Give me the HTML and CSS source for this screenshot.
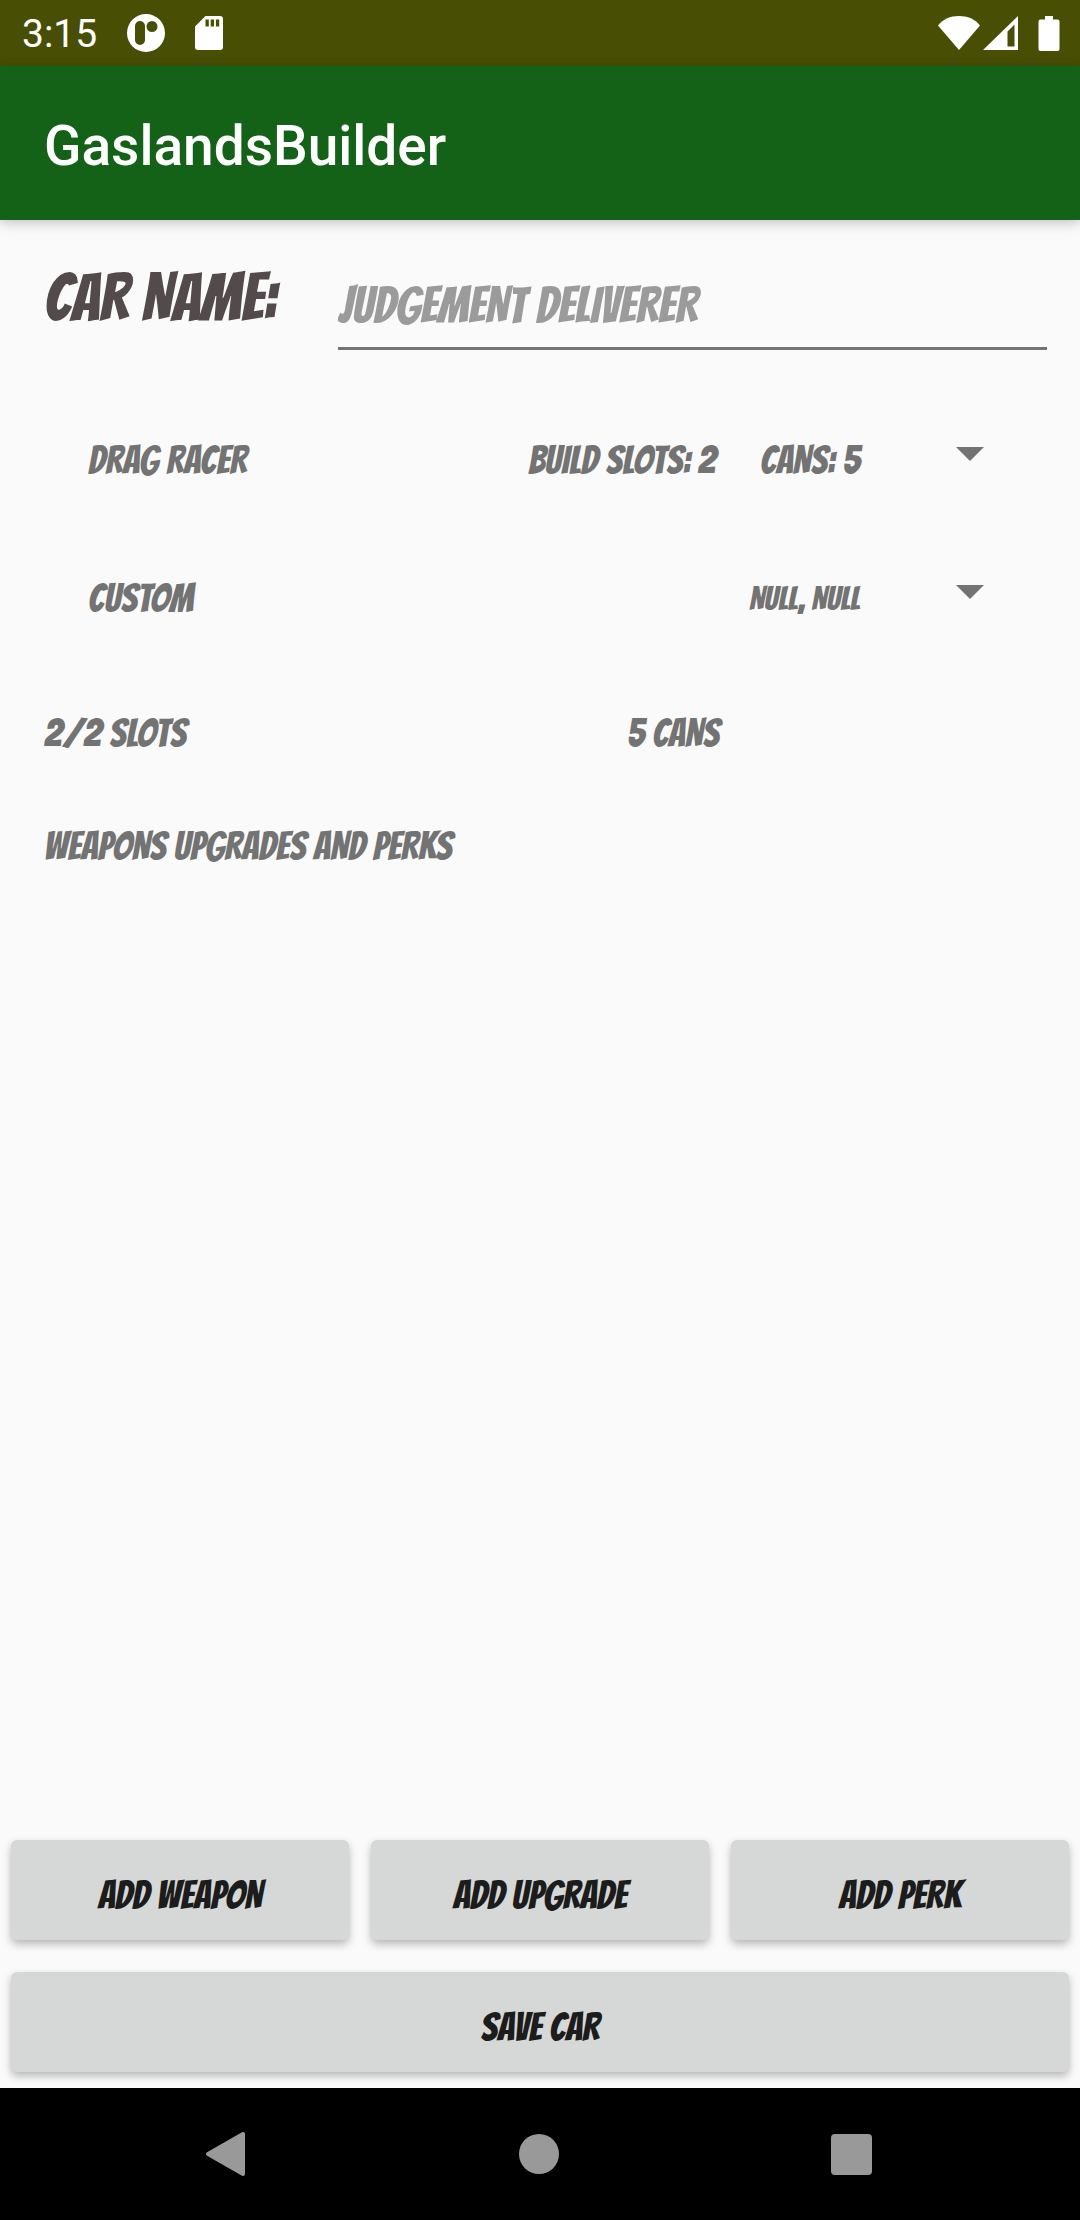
FILE: index.html
```html
<!DOCTYPE html>
<html lang="en">
<head>
<meta charset="utf-8">
<meta name="viewport" content="width=device-width, initial-scale=1">
<title>GaslandsBuilder</title>
<link rel="stylesheet" href="styles.css">
</head>
<body>
<div class="status-bar">
  <span class="clock">3:15</span>
  <svg class="status-icon" width="38" height="38" viewBox="0 0 38 38" aria-hidden="true">
    <path fill="#fff" fill-rule="evenodd" d="M19 0a19 19 0 1 1 0 38a19 19 0 1 1 0-38zM13 7a5 5 0 0 0-5 5v14a5 5 0 0 0 10 0V12a5 5 0 0 0-5-5zM25 7a5.500 5.500 0 1 0 0 11a5.500 5.500 0 1 0 0-11z"/>
  </svg>
  <svg class="status-icon card-icon" width="28" height="34" viewBox="0 0 28 34" aria-hidden="true">
    <path fill="#fff" fill-rule="evenodd" d="M10.500 0H25a3 3 0 0 1 3 3v28a3 3 0 0 1-3 3H3a3 3 0 0 1-3-3V10.500zM10.500 3.500v7h3.300v-7zM15.700 3.500v7H19v-7zM20.900 3.500v7h3.300v-7z"/>
  </svg>
  <span class="spacer"></span>
  <svg width="42" height="36" viewBox="0 0 42 36" aria-hidden="true">
    <path fill="#fff" d="M0 10.500C5 4 12.500 1 21 1s16 3 21 9.500L21 35z"/>
  </svg>
  <svg class="signal-icon" width="36" height="36" viewBox="0 0 36 36" aria-hidden="true">
    <path fill="#fff" fill-rule="evenodd" d="M35 1v34H0zM24.500 16.500v15h7V9.500z"/>
  </svg>
  <svg class="battery-icon" width="22" height="36" viewBox="0 0 22 36" aria-hidden="true">
    <path fill="#fff" d="M7 1h8v3.500h4.500A2 2 0 0 1 21.500 6.500V34a2 2 0 0 1-2 2h-17a2 2 0 0 1-2-2V6.500a2 2 0 0 1 2-2H7z"/>
  </svg>
</div>

<header class="app-bar">
  <h1 class="app-title">GaslandsBuilder</h1>
</header>

<main class="builder">
  <div class="name-row">
    <label class="name-label" for="car-name">CAR NAME:</label>
    <input class="name-input" id="car-name" type="text" placeholder="JUDGEMENT DELIVERER">
  </div>

  <div class="spinner">
    <select class="spinner-select" aria-label="Car type">
      <option>DRAG RACER</option>
    </select>
    <div class="spinner-info">
      <span>BUILD SLOTS: 2</span>
      <span>CANS: 5</span>
      <svg class="caret" width="28" height="14" viewBox="0 0 28 14" aria-hidden="true"><path fill="#737373" d="M0 0h28L14 14z"/></svg>
    </div>
  </div>

  <div class="spinner">
    <select class="spinner-select" aria-label="Sponsor">
      <option>CUSTOM</option>
    </select>
    <div class="spinner-info">
      <span class="perks">NULL, NULL</span>
      <svg class="caret" width="28" height="14" viewBox="0 0 28 14" aria-hidden="true"><path fill="#737373" d="M0 0h28L14 14z"/></svg>
    </div>
  </div>

  <div class="totals">
    <span>2/2 SLOTS</span>
    <span>5 CANS</span>
  </div>

  <h2 class="section-title">WEAPONS UPGRADES AND PERKS</h2>

  <div class="actions">
    <button class="btn" type="button">ADD WEAPON</button>
    <button class="btn" type="button">ADD UPGRADE</button>
    <button class="btn" type="button">ADD PERK</button>
    <button class="btn btn-wide" type="button">SAVE CAR</button>
  </div>
</main>

<nav class="nav-bar" aria-label="System">
  <button class="nav-btn" type="button" aria-label="Back">
    <svg width="48" height="48" viewBox="0 0 48 48"><path fill="#999" stroke="#999" stroke-width="4" stroke-linejoin="round" d="M41 4v40L6 24z"/></svg>
  </button>
  <button class="nav-btn" type="button" aria-label="Home">
    <svg width="48" height="48" viewBox="0 0 48 48"><circle cx="24" cy="24" r="20" fill="#999"/></svg>
  </button>
  <button class="nav-btn" type="button" aria-label="Recents">
    <svg width="48" height="48" viewBox="0 0 48 48"><rect x="4" y="4" width="41" height="41" rx="4" fill="#999"/></svg>
  </button>
</nav>
</body>
</html>
```

FILE: styles.css
```css
:root {
  --comic: Bangers, "Liberation Sans Narrow", "Liberation Sans", sans-serif;
  --grey: #737373;
}

* {
  box-sizing: border-box;
}

body {
  margin: 0;
  min-height: 100vh;
  display: flex;
  flex-direction: column;
  background: #fafafa;
  color: var(--grey);
  font: normal 400 39px/40px var(--comic);
}

button,
input,
select {
  font: inherit;
  color: inherit;
  border: 0;
  border-radius: 0;
  background: none;
  padding: 0;
  margin: 0;
}

.status-bar {
  display: flex;
  align-items: center;
  height: 66px;
  padding: 0 20px 0 22px;
  background: #484f04;
  color: #fff;
  font: normal 400 39px/48px Roboto, sans-serif;
}

.clock {
  padding-top: 2px;
}

.status-icon {
  margin-left: 30px;
}

.spacer {
  flex: 1;
}

.signal-icon {
  margin-left: 3px;
}

.battery-icon {
  margin-left: 19px;
}

.app-bar {
  display: flex;
  align-items: center;
  height: 154px;
  padding: 6px 44px 0;
  background: #146217;
  color: #fff;
  box-shadow: 0 2px 12px rgba(0, 0, 0, 0.25);
}

.app-title {
  margin: 0;
  font: normal 500 55px/64px Roboto, sans-serif;
}

.builder {
  flex: 1;
  display: flex;
  flex-direction: column;
}

.name-row {
  display: flex;
  align-items: flex-start;
  gap: 62px;
  padding: 38px 33px 0 44px;
}

.name-label {
  color: #534b4b;
  font-size: 66px;
  line-height: 80px;
}

.name-input {
  flex: 1;
  min-width: 0;
  height: 92px;
  padding-top: 6px;
  border-bottom: 3px solid #737575;
  font-size: 50px;
}

.name-input::placeholder {
  color: #9b9b9b;
  opacity: 1;
}

.spinner {
  display: grid;
  height: 138px;
}

.name-row + .spinner {
  margin-top: 42px;
}

.spinner-select,
.spinner-info {
  grid-area: 1 / 1;
}

.spinner-select {
  appearance: none;
  width: 100%;
  padding-left: 88px;
}

.spinner-info {
  display: flex;
  align-items: center;
  justify-content: flex-end;
  gap: 44px;
  padding-right: 96px;
  pointer-events: none;
}

.perks {
  font-size: 33px;
}

.caret {
  margin: 0 0 14px 52px;
}

.totals {
  display: grid;
  grid-template-columns: 583px 1fr;
  padding: 46px 44px 0;
}

.section-title {
  margin: 73px 44px 0;
  font: inherit;
}

.actions {
  display: grid;
  grid-template-columns: repeat(3, 1fr);
  gap: 32px 22px;
  margin-top: auto;
  padding: 0 11px 16px;
}

.btn {
  height: 100px;
  padding-top: 12px;
  border-radius: 6px;
  background: #d6d8d7;
  color: #1c1c1c;
  box-shadow: 0 4px 8px rgba(0, 0, 0, 0.28);
}

.btn-wide {
  grid-column: 1 / -1;
}

.nav-bar {
  display: flex;
  align-items: center;
  justify-content: space-between;
  height: 132px;
  padding: 0 205px 0 202px;
  background: #000;
}

.nav-btn {
  display: flex;
}
```
